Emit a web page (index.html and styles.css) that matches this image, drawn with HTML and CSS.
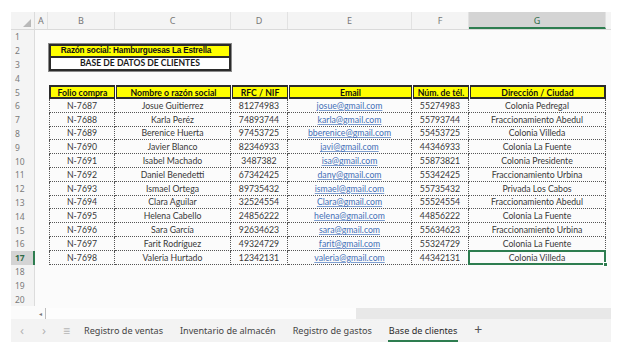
FILE: index.html
```html
<!DOCTYPE html>
<html lang="es">
<head>
<meta charset="utf-8">
<title>Base de clientes</title>
<link rel="stylesheet" href="styles.css">
</head>
<body>
<div class="app">
  <div class="colheads">
    <div class="corner"><span class="tri"></span></div>
    <div class="ch">A</div>
    <div class="ch">B</div>
    <div class="ch">C</div>
    <div class="ch">D</div>
    <div class="ch">E</div>
    <div class="ch">F</div>
    <div class="ch ch-sel">G</div>
    <div class="ch ch-end"></div>
  </div>
  <div class="body">
    <div class="rowheads">
      <div class="rh">1</div><div class="rh">2</div><div class="rh">3</div><div class="rh">4</div>
      <div class="rh">5</div><div class="rh">6</div><div class="rh">7</div><div class="rh">8</div>
      <div class="rh">9</div><div class="rh">10</div><div class="rh">11</div><div class="rh">12</div>
      <div class="rh">13</div><div class="rh">14</div><div class="rh">15</div><div class="rh">16</div>
      <div class="rh rh-sel">17</div><div class="rh">18</div><div class="rh">19</div><div class="rh">20</div>
    </div>
    <div class="cells">
      <div class="title">
        <div class="title-top">Razón social: Hamburguesas La Estrella</div>
        <div class="title-bottom">BASE DE DATOS DE CLIENTES</div>
      </div>
      <div class="table">
        <div class="th th-first">Folio compra</div>
        <div class="th">Nombre o razón social</div>
        <div class="th">RFC / NIF</div>
        <div class="th">Email</div>
        <div class="th">Núm. de tél.</div>
        <div class="th th-last">Dirección / Ciudad</div>

        <div class="td first">N-7687</div><div class="td">Josue Guitierrez</div><div class="td">81274983</div><div class="td"><a class="mail">josue@gmail.com</a></div><div class="td">55274983</div><div class="td">Colonia Pedregal</div>
        <div class="td first">N-7688</div><div class="td">Karla Peréz</div><div class="td">74893744</div><div class="td"><a class="mail">karla@gmail.com</a></div><div class="td">55793744</div><div class="td">Fraccionamiento Abedul</div>
        <div class="td first">N-7689</div><div class="td">Berenice Huerta</div><div class="td">97453725</div><div class="td"><a class="mail">bberenice@gmail.com</a></div><div class="td">55453725</div><div class="td">Colonia Villeda</div>
        <div class="td first">N-7690</div><div class="td">Javier Blanco</div><div class="td">82346933</div><div class="td"><a class="mail">javi@gmail.com</a></div><div class="td">44346933</div><div class="td">Colonia La Fuente</div>
        <div class="td first">N-7691</div><div class="td">Isabel Machado</div><div class="td">3487382</div><div class="td"><a class="mail">isa@gmail.com</a></div><div class="td">55873821</div><div class="td">Colonia Presidente</div>
        <div class="td first">N-7692</div><div class="td">Daniel Benedetti</div><div class="td">67342425</div><div class="td"><a class="mail">dany@gmail.com</a></div><div class="td">55342425</div><div class="td">Fraccionamiento Urbina</div>
        <div class="td first">N-7693</div><div class="td">Ismael Ortega</div><div class="td">89735432</div><div class="td"><a class="mail">ismael@gmail.com</a></div><div class="td">55735432</div><div class="td">Privada Los Cabos</div>
        <div class="td first">N-7694</div><div class="td">Clara Aguilar</div><div class="td">32524554</div><div class="td"><a class="mail">Clara@gmail.com</a></div><div class="td">55524554</div><div class="td">Fraccionamiento Abedul</div>
        <div class="td first">N-7695</div><div class="td">Helena Cabello</div><div class="td">24856222</div><div class="td"><a class="mail">helena@gmail.com</a></div><div class="td">44856222</div><div class="td">Colonia La Fuente</div>
        <div class="td first">N-7696</div><div class="td">Sara García</div><div class="td">92634623</div><div class="td"><a class="mail">sara@gmail.com</a></div><div class="td">55634623</div><div class="td">Fraccionamiento Urbina</div>
        <div class="td first">N-7697</div><div class="td">Farit Rodríguez</div><div class="td">49324729</div><div class="td"><a class="mail">farit@gmail.com</a></div><div class="td">55324729</div><div class="td">Colonia La Fuente</div>
        <div class="td first">N-7698</div><div class="td">Valeria Hurtado</div><div class="td">12342131</div><div class="td"><a class="mail">valeria@gmail.com</a></div><div class="td">44342131</div><div class="td selected">Colonia Villeda<span class="handle"></span></div>
      </div>
    </div>
  </div>
  <div class="hscroll">
    <div class="hs-pad"></div>
    <div class="hs-arrow">&#9666;</div>
    <div class="hs-thumb"></div>
    <div class="hs-track"></div>
  </div>
  <div class="tabs">
    <span class="nav">&lsaquo;</span>
    <span class="nav">&rsaquo;</span>
    <span class="menu">&#8801;</span>
    <span class="tab">Registro de ventas</span>
    <span class="tab">Inventario de almacén</span>
    <span class="tab">Registro de gastos</span>
    <span class="tab tab-active">Base de clientes</span>
    <span class="add">+</span>
  </div>
</div>
</body>
</html>
```
FILE: styles.css
```css
* { box-sizing: border-box; }
html, body { margin: 0; padding: 0; background: #ffffff; }
body { width: 638px; height: 353px; overflow: hidden; }

.app {
  margin: 12px 0 0 11px;
  width: 600px;
  background: #fbfbfb;
  font-family: "Lato", "Liberation Sans", sans-serif;
}

/* column headers */
.colheads {
  display: grid;
  grid-template-columns: 24px 13px 67px 116px 57px 124px 57px 137px 5px;
  height: 18px;
  background: #f4f4f4;
  border-bottom: 1px solid #dadada;
}
.corner { position: relative; border-right: 1px solid #dcdcdc; }
.tri {
  position: absolute; right: 3px; bottom: 2px;
  width: 0; height: 0;
  border-left: 8px solid transparent;
  border-bottom: 8px solid #b9b9b9;
}
.ch {
  display: flex; align-items: center; justify-content: center;
  font-family: "Noto Sans", "Liberation Sans", sans-serif;
  font-size: 9px; color: #777;
  border-right: 1px solid #e2e2e2;
}
.ch-sel {
  background: #d4d4d4; color: #2f6b48;
  border-bottom: 2px solid #2e7d50;
  padding-top: 2px;
}
.ch-end { border-right: none; }

/* body */
.body { display: flex; }
.rowheads {
  width: 24px;
  display: grid;
  grid-template-rows: repeat(20, 13.8px);
  background: #f4f4f4;
  border-right: 1px solid #dcdcdc;
}
.rh {
  display: flex; align-items: center;
  padding-left: 4px;
  font-family: "Noto Sans", "Liberation Sans", sans-serif;
  font-size: 8.5px; color: #7b7b7b;
}
.rh-sel {
  background: #d4d4d4; color: #2f6b48; font-weight: 700;
  border-right: 2px solid #2e7d50;
  margin-right: -1px;
}

.cells {
  display: grid;
  grid-template-columns: 13px 67px 116px 57px 124px 57px 137px 5px;
  grid-template-rows: repeat(20, 13.8px);
}

/* title box */
.title {
  grid-column: 2 / 4;
  grid-row: 2 / 4;
  margin: 0 0 0 1px;
  border: 2px solid #2b2b2b;
  display: grid;
  grid-template-rows: 1fr 1fr;
  box-shadow: 0 0 0 1px #8a8a8a;
}
.title-top {
  background: #ffff00;
  border-bottom: 2px solid #2b2b2b;
  font-family: "Liberation Sans", Arial, sans-serif;
  font-weight: 700; font-size: 8.2px; letter-spacing: -0.2px; color: #111;
  display: flex; align-items: center; justify-content: center;
  padding-right: 8px;
}
.title-bottom {
  background: #ffffff;
  font-size: 8.6px; font-weight: 700; color: #1a1a1a;
  display: flex; align-items: center; justify-content: center;
}

/* data table */
.table {
  grid-column: 2 / 8;
  grid-row: 5 / 18;
  display: grid;
  grid-template-columns: 67px 116px 57px 124px 57px 137px;
  grid-template-rows: repeat(13, 13.8px);
  font-size: 8.7px;
  color: #383838;
}
.th {
  background: #ffff00;
  border-top: 2px solid #2b2b2b;
  border-bottom: 2px solid #2b2b2b;
  border-left: 1px solid #2b2b2b;
  border-right: 1px solid #2b2b2b;
  margin-left: 1px;
  font-weight: 700; color: #111;
  display: flex; align-items: center; justify-content: center;
  white-space: nowrap;
}
.th-first { border-left-width: 2px; }
.th-last { border-right-width: 2px; }

.td {
  border-right: 1px dotted #555;
  border-bottom: 1px dotted #555;
  display: flex; align-items: center; justify-content: center;
  white-space: nowrap;
}
.td.first { border-left: 1px dotted #555; margin-left: 1px; }
.mail { color: #4470b8; text-decoration: underline; text-decoration-color: #7f9fd0; }

.selected { position: relative; }
.selected::after {
  content: "";
  position: absolute; left: -1px; top: -1px; right: -1px; bottom: -1px;
  border: 2px solid #2e7d50;
}
.handle {
  position: absolute; right: -3px; bottom: -3px;
  width: 5px; height: 5px;
  background: #2e7d50; border: 1px solid #fff;
  z-index: 2;
}

/* horizontal scroll */
.hscroll {
  display: flex;
  height: 13px;
  padding-top: 2px;
}
.hs-pad { width: 24px; }
.hs-arrow {
  width: 11px;
  font-size: 6px; color: #777;
  display: flex; align-items: center; justify-content: center;
  border-right: 1px solid #bdbdbd;
  background: #fbfbfb;
}
.hs-thumb { width: 310px; background: #fdfdfd; }
.hs-track { flex: 1; background: #e8e8e8; }

/* sheet tabs */
.tabs {
  height: 23px;
  background: #f3f3f3;
  display: flex; align-items: center;
  font-family: "Noto Sans", "Open Sans", sans-serif;
  font-size: 9.1px; color: #444;
  padding-left: 0;
}
.nav { color: #b5b5b5; font-size: 13px; width: 22px; text-align: center; line-height: 1; }
.menu { color: #b5b5b5; font-size: 12px; width: 23px; text-align: center; margin-right: 6px; }
.tab { margin-right: 17px; position: relative; height: 23px; line-height: 23px; white-space: nowrap; }
.tab-active { color: #2b2b2b; }
.tab-active::after {
  content: ""; position: absolute; left: -1px; right: -1px; bottom: 0;
  height: 2px; background: #2e7d50;
}
.add { color: #555; font-size: 14px; line-height: 1; }
```
